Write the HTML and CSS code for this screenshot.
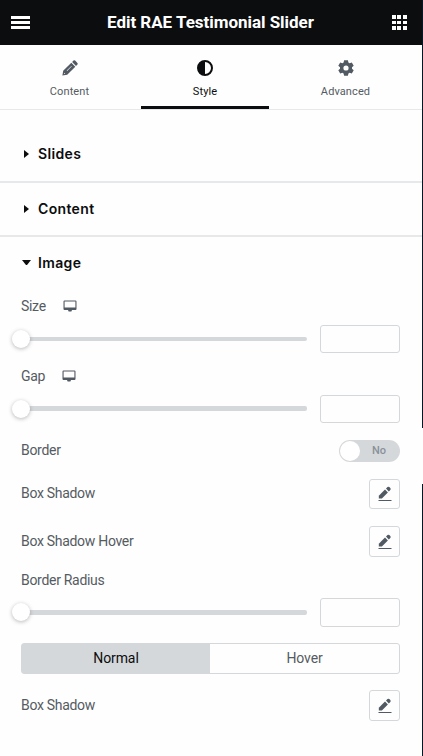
FILE: index.html
```
<!DOCTYPE html>
<html lang="en">
<head>
<meta charset="utf-8">
<title>Edit RAE Testimonial Slider</title>
<link rel="stylesheet" href="styles.css">
</head>
<body>
<svg width="0" height="0" class="defs">
  <symbol id="edit" viewBox="0 0 14 16">
    <path d="M.8 12.500V9.800L7 3.600l2.900 2.900-6 6z"/>
    <path d="M8 2.600 9.500 1.100q.9-.9 1.800 0l1 1q.9.900 0 1.800L10.800 5.400z"/>
    <path d="M.5 14h13v1H.5z"/>
  </symbol>
  <symbol id="desktop" viewBox="0 0 14 12">
    <path fill-rule="evenodd" d="M1.500.5h11q1 0 1 1v7.500q0 1-1 1H9l-.6 1.500H5.600L5 10H1.500q-1 0-1-1V1.500q0-1 1-1zM1.600 1.600v6h10.800v-6z"/>
  </symbol>
</svg>
<div class="panel">
  <header class="header">
    <div class="menu"><i></i><i></i><i></i></div>
    <h1>Edit RAE Testimonial Slider</h1>
    <div class="apps"><i></i><i></i><i></i><i></i><i></i><i></i><i></i><i></i><i></i></div>
  </header>
  <nav class="tabs">
    <div class="tab first">
      <svg viewBox="0 0 16 16"><path fill-rule="evenodd" d="M.4 15.600 1.200 10.800 9.300 2.700l4 4-8.100 8.100zM2.200 12.700 2 14l1.300-.2zM4.700 10.600l.4.400 4.700-4.700-.4-.4z"/><path d="m10.100 2 1.400-1.400q.8-.7 1.600 0l2.300 2.300q.7.8 0 1.600L14 5.900z"/></svg>
      <span>Content</span>
    </div>
    <div class="tab active">
      <svg viewBox="0 0 16 16"><path fill-rule="evenodd" d="M8 0a8 8 0 1 1 0 16A8 8 0 0 1 8 0zM8 2v12A6 6 0 0 0 8 2z"/></svg>
      <span>Style</span>
    </div>
    <div class="tab">
      <svg viewBox="0 0 16 16"><path fill-rule="evenodd" d="M6.100.2h3.800l.5 2.300 1.200.7 2.200-.7 1.900 3.300L14 7.300v1.400l1.700 1.500-1.900 3.300-2.200-.7-1.200.7-.5 2.300H6.100l-.5-2.300-1.200-.7-2.200.7-1.900-3.300L2 8.700V7.300L.3 5.800l1.900-3.300 2.200.7 1.200-.7zM8 5.400a2.600 2.600 0 1 0 0 5.200 2.600 2.600 0 0 0 0-5.200z"/></svg>
      <span>Advanced</span>
    </div>
  </nav>
  <main>
    <div class="section slides"><b class="arrow"></b><h2>Slides</h2></div>
    <div class="section content"><b class="arrow"></b><h2>Content</h2></div>
    <div class="section image"><b class="arrow down"></b><h2>Image</h2></div>
    <div class="controls">
      <div class="label size">Size<svg><use href="#desktop"/></svg></div>
      <div class="slider"><div class="track"><span class="knob"></span></div><div class="field"></div></div>
      <div class="label gap">Gap<svg><use href="#desktop"/></svg></div>
      <div class="slider"><div class="track thick"><span class="knob"></span></div><div class="field"></div></div>
      <div class="row border"><span>Border</span><div class="switch"><i></i><span>No</span></div></div>
      <div class="row shadow"><span>Box Shadow</span><div class="edit"><svg><use href="#edit"/></svg></div></div>
      <div class="row shadow-hover"><span>Box Shadow Hover</span><div class="edit"><svg><use href="#edit"/></svg></div></div>
      <div class="label radius">Border Radius</div>
      <div class="slider last"><div class="track thick"><span class="knob"></span></div><div class="field"></div></div>
      <div class="states"><div class="selected">Normal</div><div>Hover</div></div>
      <div class="row shadow-normal"><span>Box Shadow</span><div class="edit"><svg><use href="#edit"/></svg></div></div>
    </div>
  </main>
</div>
<aside class="edge"><i class="upper"></i><i class="lower"></i></aside>
</body>
</html>
```
FILE: styles.css
```
* { box-sizing: border-box; }
body {
  margin: 0;
  display: flex;
  width: 423px;
  height: 756px;
  overflow: hidden;
  background: #fefefe;
  font-family: Roboto, sans-serif;
  font-size: 14px;
  color: #555b62;
}
svg { display: block; fill: #515962; }
.defs { position: absolute; }
.panel { width: 422px; }
.edge { width: 1px; display: flex; flex-direction: column; justify-content: space-between; }
.edge i { background: #081725; }
.edge .upper { height: 428px; }
.edge .lower { height: 272px; }

.header {
  height: 45px;
  display: flex;
  align-items: center;
  justify-content: space-between;
  padding: 0 15px 0 11px;
  background: #0c0d0e;
  color: #fff;
}
.header h1 { margin: 0; padding: 0 1px 1px 0; font-size: 17px; line-height: 20px; font-weight: 700; letter-spacing: -.03px; }
.menu { width: 19px; display: grid; gap: 2px; }
.menu i { height: 3px; background: #fff; }
.apps { display: grid; grid-template-columns: 4px 4px 4px; column-gap: 1.500px; row-gap: 2px; }
.apps i { height: 3.500px; background: #fff; }

.tabs { height: 65px; display: flex; border-bottom: 1px solid #e6e9eb; font-size: 11px; }
.tab {
  flex: 1;
  display: flex;
  flex-direction: column;
  align-items: center;
  padding-top: 15px;
  height: 64px;
  letter-spacing: .1px;
}
.tab.first { flex: 0 0 141px; padding-right: 2px; }
.tab svg { width: 16px; height: 16px; margin-bottom: 9px; }
.tab span { line-height: 14px; }
.tab.active { flex: 0 0 128px; border-bottom: 3px solid #0c0d0e; color: #0c0d0e; }
.tab.active svg { fill: #0c0d0e; }

.section { display: flex; align-items: center; padding-left: 24px; color: #0c0d0e; }
.section h2 { margin: 0; font: 600 14px/20px Inter, sans-serif; letter-spacing: .35px; }
.arrow {
  width: 5px;
  margin-right: 9px;
  border: solid transparent;
  border-width: 4px 0 4px 5px;
  border-left-color: #0c0d0e;
}
.arrow.down { width: 9px; margin: 0 7px 0 -2px; border-width: 5px 4.500px 0; border-color: #0c0d0e transparent; }
.slides { height: 73px; padding-top: 16px; border-bottom: 2px solid #e6e8ea; }
.content { height: 54px; border-bottom: 2px solid #e6e8ea; }
.image { height: 53px; padding-bottom: 2px; }

.controls { padding: 0 22px 0 21px; letter-spacing: -.3px; }
.label { display: flex; align-items: center; line-height: 20px; }
.label svg { width: 14px; height: 12px; }
.size { margin-top: 6px; }
.size svg { margin-left: 17px; }
.gap { margin-top: 13px; }
.gap svg { margin-left: 17px; }
.slider { display: flex; align-items: center; justify-content: space-between; height: 28px; margin-top: 9px; }
.track { position: relative; width: 286px; height: 4px; border-radius: 2px; background: #d5d8da; }
.track.thick { height: 5px; margin-bottom: 1px; }
.knob {
  position: absolute;
  left: -9px;
  top: 50%;
  width: 18px;
  height: 18px;
  margin-top: -9px;
  border-radius: 50%;
  background: #fff;
  box-shadow: 0 1px 4px rgba(0, 0, 0, .28);
}
.field { width: 80px; height: 28px; border: 1px solid #d5d8da; border-radius: 3px; }
.row { display: flex; align-items: center; justify-content: space-between; line-height: 20px; }
.row > span { padding-bottom: 2px; }
.border { margin-top: 17px; height: 22px; }
.switch {
  width: 61px;
  height: 22px;
  display: flex;
  align-items: center;
  padding: 0 14px 0 1px;
  justify-content: space-between;
  border-radius: 11px;
  background: #d5d8da;
  color: #89919a;
  font-size: 11px;
  font-weight: 500;
  letter-spacing: 0;
}
.switch i { width: 20px; height: 20px; border-radius: 50%; background: #fff; }
.edit {
  width: 31px;
  height: 31px;
  display: flex;
  align-items: center;
  justify-content: center;
  border: 1px solid #d5d8da;
  border-radius: 3px;
}
.edit svg { width: 14px; height: 16px; margin-left: 1px; }
.shadow { margin-top: 17px; height: 30px; }
.shadow .edit { height: 30px; }
.shadow-hover { margin-top: 17px; height: 31px; }
.radius { margin-top: 13px; }
.slider.last { margin-top: 8px; height: 29px; }
.last .field { height: 29px; }
.states {
  display: flex;
  height: 31px;
  margin-top: 16px;
  border: 1px solid #d5d8da;
  border-radius: 3px;
  line-height: 29px;
  text-align: center;
  letter-spacing: -.1px;
}
.states div { flex: 1; }
.states .selected { flex: 0 0 188px; background: #d5d8da; color: #0c0d0e; }
.shadow-normal { margin-top: 16px; height: 31px; }
```
